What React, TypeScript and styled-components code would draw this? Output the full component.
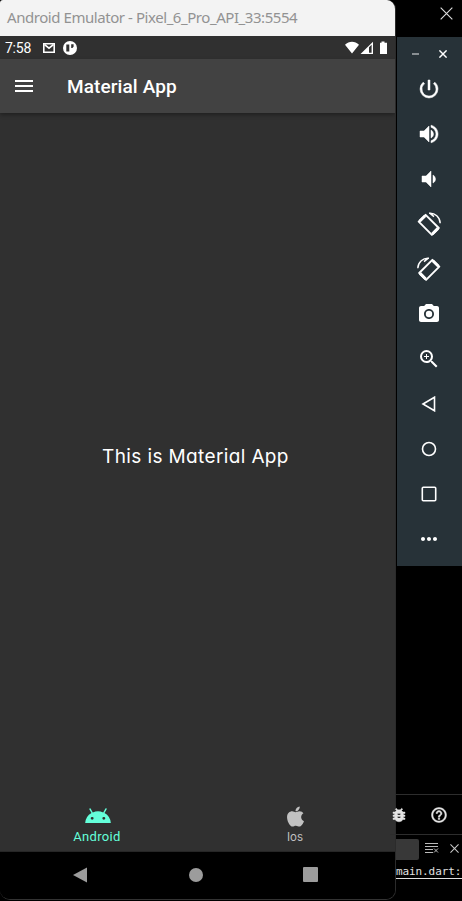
import React from 'react';
import styled, { createGlobalStyle } from 'styled-components';
import {
  MdPowerSettingsNew, MdVolumeUp, MdVolumeDown, MdPhotoCamera, MdZoomIn,
  MdBugReport, MdHelpOutline, MdMenu, MdAndroid, MdMoreHoriz,
} from 'react-icons/md';
import { FaApple } from 'react-icons/fa';

const Global = createGlobalStyle`
  * { box-sizing: border-box; }
  body { margin: 0; background: #000; overflow: hidden; }
  svg { display: block; flex: none; }
`;

const Desktop = styled.div`
  display: flex;
  width: 462px;
  height: 901px;
  background: #000;
  overflow: hidden;
`;

const Phone = styled.main`
  display: flex;
  flex-direction: column;
  width: 396px;
  height: 900px;
  border-right: 1px solid #2b2b2b;
  border-bottom: 1px solid #333;
  border-radius: 3px 9px 10px 10px;
  overflow: hidden;
  flex: none;
`;

const TitleBar = styled.header`
  height: 36px;
  padding-left: 7px;
  background: #f3f3f3;
  color: #929292;
  font: 15px/35px "Noto Sans", sans-serif;
  white-space: nowrap;
`;

const Fit = styled.span<{ $space: number }>`
  letter-spacing: ${p => p.$space}px;
`;

const StatusBar = styled.div`
  display: flex;
  align-items: center;
  height: 23px;
  padding: 1px 7px 0 5px;
  background: #303030;
  color: #fff;
  font: 14px/22px Roboto, sans-serif;
`;

const StatusTime = styled.span`
  width: 38px;
  letter-spacing: -0.25px;
`;

const Notices = styled.div`
  display: flex;
  align-items: center;
  gap: 8px;
  flex: 1;
`;

const Signals = styled.div`
  display: flex;
  align-items: center;
`;

const AppBar = styled.div`
  display: flex;
  align-items: center;
  gap: 31px;
  height: 54px;
  padding: 1px 0 0 12px;
  background: #424242;
  color: #fff;
  box-shadow: 0 2px 4px #0005;
  font: 500 19px/54px Roboto, sans-serif;
  z-index: 1;

  svg { margin-top: -1px; }
`;

const Content = styled.section`
  display: flex;
  justify-content: center;
  align-items: center;
  flex: 1;
  padding: 3px 4px 0 0;
  background: #303030;
  color: #fff;
  font: 400 19px/28px Inter, sans-serif;
  font-feature-settings: "cv11" 1;
`;

const Tabs = styled.nav`
  display: flex;
  height: 55px;
  padding-right: 3px;
  background: #303030;
  border-bottom: 1px solid #262626;
`;

const Tab = styled.div<{ $active?: boolean }>`
  display: flex;
  flex-direction: column;
  align-items: center;
  flex: 1;
  padding-right: ${p => (p.$active ? 4 : 0)}px;
  color: ${p => (p.$active ? '#64ffda' : '#c1c1c1')};
  font: ${p => (p.$active ? '13px/16px Roboto' : '11.5px/17px Inter')}, sans-serif;
  letter-spacing: ${p => (p.$active ? 0.35 : 0)}px;
`;

const TabIcon = styled.div<{ $shift?: number }>`
  display: flex;
  align-items: center;
  justify-content: center;
  height: 32px;
  padding: 6px 0 0 ${p => p.$shift ?? 0}px;
`;

const SystemNav = styled.div`
  display: flex;
  justify-content: center;
  align-items: center;
  gap: 100.5px;
  height: 47px;
  padding: 0 4px 2px 0;
  background: #000;
  color: #9c9c9c;
`;

const Side = styled.aside`
  display: flex;
  flex-direction: column;
  flex: 1;
  min-width: 0;
`;

const OuterClose = styled.div`
  display: flex;
  justify-content: flex-end;
  height: 37px;
  padding: 7px 9px 0 0;
  color: #ddd;
`;

const Tools = styled.div`
  display: flex;
  flex-direction: column;
  align-items: center;
  height: 529px;
  margin-left: 1px;
  padding-right: 1px;
  background: #273238;
  color: #fff;
`;

const WindowControls = styled.div`
  display: flex;
  gap: 19px;
  height: 29px;
  padding-top: 13px;
`;

const Tool = styled.div`
  display: flex;
  align-items: center;
  justify-content: center;
  height: 45px;

  .bold path:not([fill="none"]) { stroke: #fff; stroke-width: 0.5px; }
`;

const Editor = styled.div`
  margin-top: 228px;
  border-top: 1px solid #2d2d2d;
  color: #e4e4e4;
`;

const EditorIcons = styled.div`
  display: flex;
  align-items: center;
  gap: 22px;
  height: 40px;
  margin-left: -6px;
  border-bottom: 1px solid #2d2d2d;

  svg path:not([fill="none"]) { stroke: #e4e4e4; stroke-width: 0.6px; }
`;

const SearchRow = styled.div`
  display: flex;
  align-items: flex-start;
  height: 30px;
  padding-top: 4px;
`;

const SearchBox = styled.div`
  width: 23px;
  height: 21px;
  margin-right: 6px;
  background: #383838;
  border-radius: 0 2px 2px 0;
`;

const SearchActions = styled.div`
  display: flex;
  align-items: center;
  gap: 11px;
  padding-top: 3px;
  color: #c8c8c8;
`;

const SourceLink = styled.div`
  height: 14px;
  white-space: nowrap;
  border-bottom: 1px solid #e0e0e0;
  color: #e0e0e0;
  font: 11px/14px "DejaVu Sans Mono", monospace;
  letter-spacing: -0.1px;
`;

const Cross = ({ size, width = 1 }: { size: number; width?: number }) => (
  <svg width={size} height={size} viewBox="0 0 14 14" fill="none" stroke="currentColor" strokeWidth={width}>
    <path d="M.7.7l12.6 12.6M13.3.7L.7 13.3" />
  </svg>
);

const Rotate = ({ right = false }: { right?: boolean }) => (
  <svg width="24" height="24" viewBox="0 0 24 24" fill="none" stroke="#fff">
    <g transform={right ? 'translate(24 0) scale(-1 1)' : undefined}>
      <path d="M8.6 2.8L21.8 16L14.9 22.9L1.7 9.7Z" strokeWidth="1.9" strokeLinejoin="round" />
      <path d="M2.6 9.3L8.2 3.7M15.3 22L20.9 16.4" strokeWidth="3" />
      <path d="M12 1.3C18 .6 23 5.5 23.2 11.2M13 1.4l4 3.2" strokeWidth="1.4" />
    </g>
  </svg>
);

export default function App() {
  return (
    <>
      <Global />
      <Desktop>
        <Phone>
          <TitleBar><Fit $space={-0.44}>Android Emulator - Pixel_6_Pro_API_33:5554</Fit></TitleBar>
          <StatusBar>
            <StatusTime>7:58</StatusTime>
            <Notices>
              <svg width="12" height="10" viewBox="0 0 12 10" fill="none" stroke="#fff">
                <path d="M.8.7h10.4v8.6H.8z" strokeWidth="1.6" />
                <path d="M1.6 1.6L6 5.2l4.4-3.6" strokeWidth="1.7" />
              </svg>
              <svg width="14" height="14" viewBox="0 0 14 14">
                <circle cx="7" cy="7" r="7" fill="#fff" />
                <path d="M3.3 3.6h3v6.8h-3zM8.2 3.2h2.4v2.6L9.4 7H8.2z" fill="#303030" />
              </svg>
            </Notices>
            <Signals>
              <svg width="43" height="14" viewBox="0 0 43 14" fill="#fff">
                <path d="M0 3.7C4-.2 10-.2 14 3.7L7 12.5zM15.5 13L28 .7V13zM36.5 .5h3v1.3H42V13h-7V1.8h1.5z" />
                <path d="M24 6.2l2.6-2.4V11.7H24z" fill="#303030" />
              </svg>
            </Signals>
          </StatusBar>
          <AppBar><MdMenu size={24} /><Fit $space={0.1}>Material App</Fit></AppBar>
          <Content><Fit $space={0.37}>This is Material App</Fit></Content>
          <Tabs>
            <Tab $active><TabIcon $shift={2}><MdAndroid size={28} /></TabIcon>Android</Tab>
            <Tab><TabIcon $shift={1}><FaApple size={23} /></TabIcon>Ios</Tab>
          </Tabs>
          <SystemNav>
            <svg width="15" height="16" viewBox="0 0 15 16" fill="currentColor"><path d="M0 8L14 .4v15.2z" /></svg>
            <svg width="14" height="14"><circle cx="7" cy="7" r="7" fill="currentColor" /></svg>
            <svg width="15" height="15"><rect width="15" height="15" rx="1" fill="currentColor" /></svg>
          </SystemNav>
        </Phone>
        <Side>
          <OuterClose><Cross size={13} width={1.2} /></OuterClose>
          <Tools>
            <WindowControls>
              <svg width="9" height="9"><path d="M1 4h7" stroke="#9aa0a3" strokeWidth="1.7" /></svg>
              <Cross size={8} width={2.5} />
            </WindowControls>
            <Tool><MdPowerSettingsNew className="bold" size={24} /></Tool>
            <Tool><MdVolumeUp className="bold" size={24} /></Tool>
            <Tool><MdVolumeDown className="bold" size={24} /></Tool>
            <Tool><Rotate /></Tool>
            <Tool><Rotate right /></Tool>
            <Tool><MdPhotoCamera size={24} /></Tool>
            <Tool><MdZoomIn size={24} /></Tool>
            <Tool><svg width="16" height="16" fill="none" stroke="#fff" strokeWidth="1.6"><path d="M2 8L13.5 1.2v13.6z" /></svg></Tool>
            <Tool><svg width="16" height="16" fill="none" stroke="#fff" strokeWidth="1.6"><circle cx="8" cy="8" r="6.5" /></svg></Tool>
            <Tool><svg width="16" height="16" fill="none" stroke="#fff" strokeWidth="1.6"><rect x="1.3" y="1.3" width="13.4" height="13.4" rx="1" /></svg></Tool>
            <Tool><MdMoreHoriz size={24} /></Tool>
          </Tools>
          <Editor>
            <EditorIcons><MdBugReport size={18} /><MdHelpOutline size={18} /></EditorIcons>
            <SearchRow>
              <SearchBox />
              <SearchActions>
                <svg width="14" height="12" stroke="#bbb" fill="none"><path d="M0 1.5h13M0 4.5h13M0 7.5h8M0 10.5h8M9 6.5l4 4M13 6.5l-4 4" /></svg>
                <Cross size={9} width={1.6} />
              </SearchActions>
            </SearchRow>
            <SourceLink>main.dart:</SourceLink>
          </Editor>
        </Side>
      </Desktop>
    </>
  );
}
